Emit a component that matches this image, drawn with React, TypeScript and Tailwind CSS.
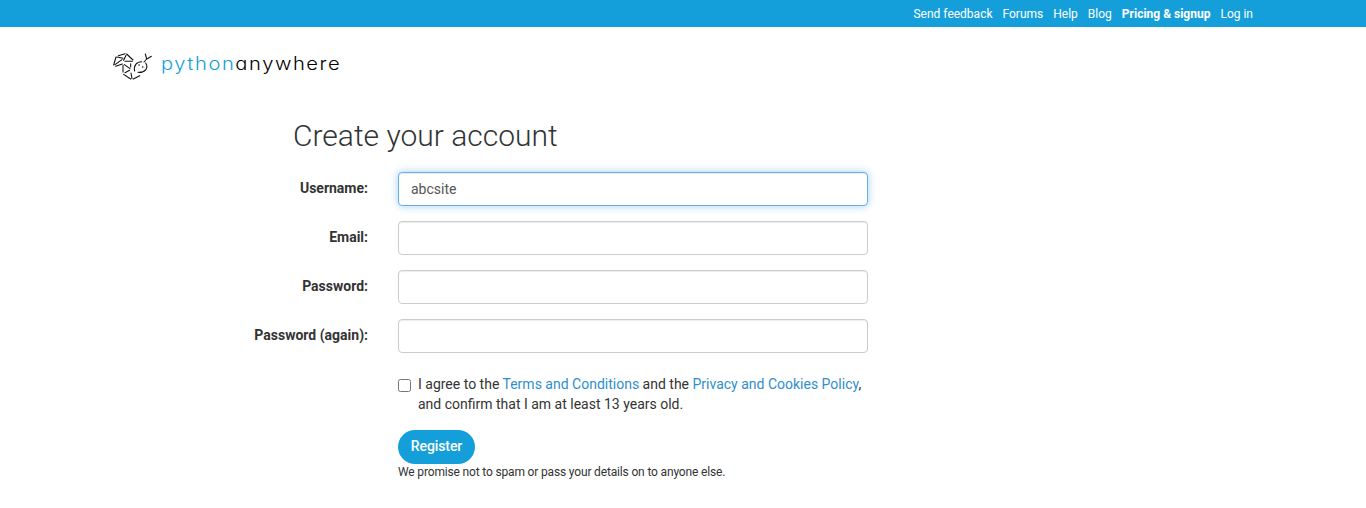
import { useState } from "react";

const navLinks = ["Send feedback", "Forums", "Help", "Blog", "Pricing & signup", "Log in"];

function LogoMark() {
  return (
    <svg
      className="h-[30px] w-[42px] shrink-0"
      viewBox="21 18 126 90"
      fill="none"
      stroke="#111"
      strokeWidth="3.2"
      strokeLinecap="round"
      strokeLinejoin="round"
      aria-hidden="true"
    >
      <path d="M33 36 26 60M36 36 54 40M51 44 30 59M32 64 52 57" />
      <path d="M40 32 60 26M65 27 84 45M63 31 56 46M60 49 82 49" />
      <path d="M54 61V81M58 59 75 71M60 83 74 76M77 56V66" />
      <path d="M56 88 77 102M78 84 81 101M85 102 104 92" />
      <path d="M110 50C95 50 85 62 89 78M122 54C132 69 119 84 99 82" />
      <path d="M117 51 125 42 121 27M127 41 139 34" />
      <path d="M102 60h.5M113 66h.5" strokeWidth="4" />
    </svg>
  );
}

function Field({ label, type = "text", value, active = false }: {
  label: string;
  type?: string;
  value?: string;
  active?: boolean;
}) {
  const [text, setText] = useState(value ?? "");
  return (
    <label className="flex h-[34px] items-start">
      <span className="w-[255px] pt-[6px] text-right font-bold">{label}</span>
      <input
        type={type}
        value={text}
        onChange={(e) => setText(e.target.value)}
        className={
          "ml-[30px] h-[34px] w-[470px] rounded-[4px] border bg-white px-3 text-[14px] text-[#555] outline-none " +
          (active
            ? "border-[#66afe9] shadow-[inset_0_1px_1px_rgba(0,0,0,0.075),0_0_8px_rgba(102,175,233,0.6)]"
            : "border-[#ccc] shadow-[inset_0_1px_1px_rgba(0,0,0,0.075)]")
        }
      />
    </label>
  );
}

export default function App() {
  return (
    <div className="h-[508px] overflow-hidden bg-white font-['Roboto',sans-serif] text-[14px] leading-5 text-[#333]">
      <nav className="flex h-[27px] justify-end gap-[10px] bg-[#159fda] pt-1 pr-[113px] text-[12px] leading-[20px] text-white">
        {navLinks.map((link) => (
          <a key={link} href="#" className={link === "Pricing & signup" ? "font-bold" : ""}>
            {link}
          </a>
        ))}
      </nav>

      <header className="flex h-[84px] items-start pt-6 pl-[112px]">
        <LogoMark />
        <div className="ml-[7px] flex origin-left scale-x-[1.12] pt-[1px] font-['Inter',sans-serif] text-[18px] leading-6 font-light tracking-[1.4px] [font-feature-settings:'cv11']">
          <span className="text-[#159fda]">python</span>
          <span className="text-black">anywhere</span>
        </div>
      </header>

      <main className="pl-[113px]">
        <h1 className="pt-[7px] pl-[180px] text-[30px] leading-[35px] font-light">Create your account</h1>
        <form className="pt-[19px]" onSubmit={(e) => e.preventDefault()}>
          <div className="flex flex-col gap-[15px]">
            <Field label="Username:" value="abcsite" active />
            <Field label="Email:" />
            <Field label="Password:" type="password" />
            <Field label="Password (again):" type="password" />
          </div>
          <div className="ml-[285px] w-[480px] pt-[21px]">
            <label className="flex items-start">
              <input
                type="checkbox"
                className="mt-[5px] mr-[7px] h-[13px] w-[13px] shrink-0 appearance-none rounded-[2.5px] border border-[#767676] bg-white checked:bg-[#159fda]"
              />
              <span>
                I agree to the <a href="#" className="text-[#2f8fcb]">Terms and Conditions</a> and the{" "}
                <a href="#" className="text-[#2f8fcb]">Privacy and Cookies Policy</a>,
                <br />
                and confirm that I am at least 13 years old.
              </span>
            </label>
            <button type="submit" className="mt-4 block h-[34px] w-[77px] rounded-full bg-[#159fda] pb-[2px] font-medium tracking-[-0.1px] text-white">
              Register
            </button>
            <p className="text-[12px] leading-[17px] tracking-[-0.16px]">
              We promise not to spam or pass your details on to anyone else.
            </p>
          </div>
        </form>
      </main>
    </div>
  );
}
